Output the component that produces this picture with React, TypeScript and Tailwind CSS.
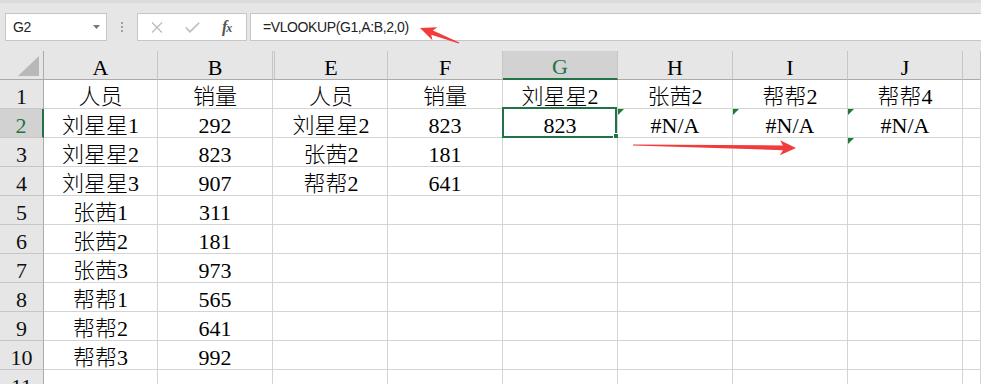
import React from "react";

const GRID =
  "grid grid-cols-[44px_114px_115px_2px_113px_115px_115px_115px_115px_115px_1fr]";

const headers = ["A", "B", "", "E", "F", "G", "H", "I", "J", ""];

const data: string[][] = [
  ["人员", "销量", "", "人员", "销量", "刘星星2", "张茜2", "帮帮2", "帮帮4", ""],
  ["刘星星1", "292", "", "刘星星2", "823", "823", "#N/A", "#N/A", "#N/A", ""],
  ["刘星星2", "823", "", "张茜2", "181", "", "", "", "", ""],
  ["刘星星3", "907", "", "帮帮2", "641", "", "", "", "", ""],
  ["张茜1", "311", "", "", "", "", "", "", "", ""],
  ["张茜2", "181", "", "", "", "", "", "", "", ""],
  ["张茜3", "973", "", "", "", "", "", "", "", ""],
  ["帮帮1", "565", "", "", "", "", "", "", "", ""],
  ["帮帮2", "641", "", "", "", "", "", "", "", ""],
  ["帮帮3", "992", "", "", "", "", "", "", "", ""],
  ["", "", "", "", "", "", "", "", "", ""],
];

const errorCells = new Set(["2-6", "2-7", "2-8", "3-8"]);

function arrowPoints(
  tx: number,
  ty: number,
  hx: number,
  hy: number,
  headLen: number,
  headHalf: number,
  neckHalf: number,
  tailHalf: number
) {
  const dx = hx - tx;
  const dy = hy - ty;
  const L = Math.hypot(dx, dy);
  const ux = dx / L;
  const uy = dy / L;
  const px = -uy;
  const py = ux;
  const bx = hx - ux * headLen;
  const by = hy - uy * headLen;
  const nx = hx - ux * (headLen - 3);
  const ny = hy - uy * (headLen - 3);
  const pts = [
    [tx + px * tailHalf, ty + py * tailHalf],
    [nx + px * neckHalf, ny + py * neckHalf],
    [bx + px * headHalf, by + py * headHalf],
    [hx, hy],
    [bx - px * headHalf, by - py * headHalf],
    [nx - px * neckHalf, ny - py * neckHalf],
    [tx - px * tailHalf, ty - py * tailHalf],
  ];
  return pts.map((p) => `${p[0].toFixed(1)},${p[1].toFixed(1)}`).join(" ");
}

const CELL_FONT =
  "font-['Liberation_Serif','Noto_Sans_CJK_SC',serif] font-light text-[22px] leading-[22px]";

export default function App() {
  return (
    <div className="relative w-[981px] h-[384px] overflow-hidden bg-white">
      {/* Formula bar area */}
      <div className="h-[51px] bg-[#e6e6e6] border-t-[3px] border-t-[#dcdcdc] flex items-start pt-[10px] font-['Liberation_Sans',sans-serif]">
        {/* Name box */}
        <div className="ml-[5px] w-[102px] h-[28px] bg-white border border-[#c6c6c6] flex items-center justify-between pl-[7px] pr-[6px]">
          <span className="text-[14px] text-[#222] tracking-[-0.5px]">G2</span>
          <svg width="7" height="4" viewBox="0 0 7 4">
            <polygon points="0,0 7,0 3.5,4" fill="#777" />
          </svg>
        </div>
        {/* dots */}
        <div className="w-[30px] h-[28px] flex flex-col items-center justify-center gap-[2px]">
          <div className="w-[2px] h-[2px] bg-[#a0a0a0]" />
          <div className="w-[2px] h-[2px] bg-[#a0a0a0]" />
          <div className="w-[2px] h-[2px] bg-[#a0a0a0]" />
        </div>
        {/* buttons */}
        <div className="w-[110px] h-[28px] bg-white border border-[#c6c6c6] flex items-center">
          <svg className="ml-[13px]" width="12" height="11" viewBox="0 0 12 11">
            <path d="M1 0.5 L11 10.5 M11 0.5 L1 10.5" stroke="#bcbcbc" strokeWidth="1.3" fill="none" />
          </svg>
          <svg className="ml-[22px]" width="15" height="11" viewBox="0 0 15 11">
            <path d="M0.8 5.5 L5 9.8 L14.2 0.8" stroke="#bcbcbc" strokeWidth="1.6" fill="none" />
          </svg>
          <span className="ml-[22px] italic font-bold font-['Liberation_Serif',serif] text-[16px] text-[#555] leading-none tracking-[-1px]">
            f<span className="text-[12px]">x</span>
          </span>
        </div>
        {/* formula */}
        <div className="ml-[3px] flex-1 h-[28px] bg-white border border-[#c6c6c6] border-r-0 flex items-center pl-[12px]">
          <span className="text-[14px] text-[#222] tracking-[-0.4px]">=VLOOKUP(G1,A:B,2,0)</span>
        </div>
      </div>

      {/* Column headers */}
      <div className={`${GRID} h-[29px] bg-[#e6e6e6] ${CELL_FONT}`}>
        <div className="border-r border-b border-r-[#ababab] border-b-[#ababab] flex items-end justify-end pr-[4px] pb-[3px]">
          <svg width="21" height="20" viewBox="0 0 21 20">
            <polygon points="0,20 21,20 21,0" fill="#b8b8b8" />
          </svg>
        </div>
        {headers.map((h, i) => {
          const selected = i === 5;
          if (i === 2) {
            return <div key={i} className="border-r border-r-[#c6c6c6] border-b border-b-[#ababab]" />;
          }
          return (
            <div
              key={i}
              className={
                selected
                  ? "bg-[#d2d2d2] border-r border-r-[#c6c6c6] border-b-2 border-b-[#217346] text-[#217346] flex items-end justify-center"
                  : "border-r border-r-[#c6c6c6] border-b border-b-[#ababab] text-black flex items-end justify-center"
              }
            >
              {h}
            </div>
          );
        })}
      </div>

      {/* Rows */}
      {data.map((row, ri) => {
        const r = ri + 1;
        const rowSel = r === 2;
        return (
          <div key={r} className={`${GRID} h-[29px] ${CELL_FONT}`}>
            <div
              className={
                rowSel
                  ? "bg-[#d2d2d2] border-r-2 border-r-[#217346] border-b border-b-[#c6c6c6] text-[#217346] flex items-end justify-center"
                  : "bg-[#e6e6e6] border-r border-r-[#ababab] border-b border-b-[#c6c6c6] text-[#111] flex items-end justify-center"
              }
            >
              {r}
            </div>
            {row.map((v, ci) => {
              if (ci === 2) {
                return <div key={ci} className="border-b border-[#d4d4d4]" />;
              }
              const isSel = r === 2 && ci === 5;
              const hasErr = errorCells.has(`${r}-${ci}`);
              return (
                <div
                  key={ci}
                  className="relative border-r border-b border-[#d4d4d4] flex items-end justify-center text-black"
                >
                  {v}
                  {hasErr && (
                    <svg className="absolute top-0 left-0" width="6" height="6" viewBox="0 0 6 6">
                      <polygon points="0,0 6,0 0,6" fill="#1f7a32" />
                    </svg>
                  )}
                  {isSel && (
                    <>
                      <div className="absolute left-[-1px] right-0 top-[-2px] bottom-[-1px] border-2 border-[#217346]" />
                      <div className="absolute right-[-2px] bottom-[-2px] w-[6px] h-[6px] bg-[#217346] border border-white" />
                    </>
                  )}
                </div>
              );
            })}
          </div>
        );
      })}

      {/* Red annotation arrows */}
      <svg
        className="absolute inset-0 pointer-events-none"
        width="981"
        height="384"
        viewBox="0 0 981 384"
      >
        <polygon points={arrowPoints(459, 43, 420, 28, 16, 7, 2.2, 0.6)} fill="#f23b3b" />
        <polygon points={arrowPoints(633, 145, 796, 148, 16, 7.5, 2.4, 0.6)} fill="#f23b3b" />
      </svg>
    </div>
  );
}
